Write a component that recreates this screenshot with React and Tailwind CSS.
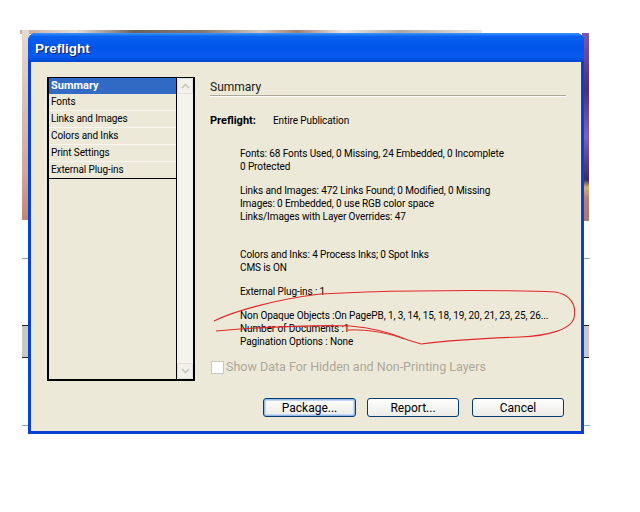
import React from "react";

const items = ["Fonts", "Links and Images", "Colors and Inks", "Print Settings", "External Plug-ins"];

function Chevron({ up }) {
  return (
    <svg width="9" height="6" viewBox="0 0 9 6">
      <path d={up ? "M1 5 L4.5 1.5 L8 5" : "M1 1 L4.5 4.5 L8 1"} fill="none" stroke="#c9c6ba" strokeWidth="1.6" />
    </svg>
  );
}

function XPButton({ children, focused }) {
  return (
    <div
      className={`flex items-center justify-center h-[19px] rounded-[3px] border border-[#003c74] bg-gradient-to-b from-white to-[#ecebe6] text-[12px] text-black ${
        focused ? "shadow-[inset_0_0_0_1px_#98b8ea,inset_0_0_0_2px_#c5d8f5]" : ""
      }`}
    >
      {children}
    </div>
  );
}

export default function App() {
  return (
    <div className="relative w-[640px] h-[512px] bg-white overflow-hidden pt-[33px] pl-[28px] font-['Roboto','Liberation_Sans',sans-serif]">
      {/* background desktop fragments */}
      <div className="absolute left-[20px] top-[30px] w-[462px] h-[4px] bg-[linear-gradient(90deg,#c9a898_0%,#e8ded6_12%,#6e6258_25%,#8a7a70_40%,#d6c8bc_52%,#a08070_60%,#efe9e4_70%,#b0a8a0_82%,#ece6e0_100%)]" />
      <div className="absolute left-[22px] top-[30px] w-[7px] h-[190px] bg-[linear-gradient(180deg,#e6dad2_0%,#d8c0b4_40%,#cfa898_75%,#c08676_100%)]" />
      <div className="absolute left-[582px] top-[33px] w-[7px] h-[188px] bg-[linear-gradient(180deg,#7a5ab0_0%,#4a2f7a_30%,#8060c0_55%,#3c2a60_78%,#d8b070_82%,#b88070_88%,#a87868_100%)]" />
      <div className="absolute left-[22px] top-[258px] w-[6px] h-[1px] bg-[#8fa6b8]" />
      <div className="absolute left-[22px] top-[325px] w-[6px] h-[33px] bg-[#c8c8c8] border-y border-[#202020]" />
      <div className="absolute left-[22px] top-[425px] w-[6px] h-[1px] bg-[#8fa6b8]" />
      <div className="absolute left-[584px] top-[258px] w-[6px] h-[1px] bg-[#8fa6b8]" />
      <div className="absolute left-[584px] top-[325px] w-[5px] h-[33px] bg-[#c8c8c8] border-y border-[#202020]" />
      <div className="absolute left-[584px] top-[425px] w-[6px] h-[1px] bg-[#8fa6b8]" />

      {/* dialog */}
      <div className="relative w-[556px] h-[401px] flex flex-col rounded-t-[8px] overflow-hidden bg-[#0a3fd4]">
        <div className="h-[29px] shrink-0 flex items-center px-[7px] pt-[4px] bg-[linear-gradient(180deg,#3d95ff_0%,#0a62f0_12%,#0055e8_50%,#0a5af0_80%,#0046d0_100%)]">
          <span className="font-['Liberation_Sans',sans-serif] font-bold text-[13.5px] text-white [text-shadow:1px_1px_0_#0a1e6e]">
            Preflight
          </span>
        </div>
        <div className="flex-1 mx-[3px] mb-[3px] bg-[#ece9d8] flex flex-col pl-[16px] pt-[15px]">
          <div className="flex">
            {/* list */}
            <div className="w-[148px] h-[304px] border-2 border-black border-t flex">
              <div className="w-[127px] flex flex-col">
                <div className="h-[16px] bg-[#316ac5] text-white font-bold text-[11px] leading-[16px] pl-[2px]">Summary</div>
                {items.map((t, i) => (
                  <div
                    key={t}
                    className={`h-[17px] text-[10px] tracking-[-0.1px] leading-[16px] pl-[2px] text-black border-b ${
                      i === items.length - 1 ? "border-black" : "border-[#f7f6f0]"
                    }`}
                  >
                    {t}
                  </div>
                ))}
              </div>
              <div className="w-[1px] bg-black" />
              <div className="flex-1 flex flex-col justify-between bg-[#f4f3ee]">
                <div className="h-[16px] flex items-center justify-center bg-[#f2f1eb] border border-[#e2e0d6] rounded-[2px]">
                  <Chevron up />
                </div>
                <div className="h-[16px] flex items-center justify-center bg-[#f2f1eb] border border-[#e2e0d6] rounded-[2px]">
                  <Chevron />
                </div>
              </div>
            </div>

            {/* summary panel */}
            <div className="ml-[15px] w-[356px] flex flex-col text-[10px] leading-[13px] tracking-[-0.1px] text-black">
              <div className="mt-[3px] text-[12px] leading-[14px] tracking-normal text-[#202020]">Summary</div>
              <div className="mt-[1px] h-[2px] border-t border-[#aca899] border-b border-b-white" />
              <div className="mt-[17px] flex items-baseline">
                <span className="w-[63px] font-bold text-[11px] tracking-normal">Preflight:</span>
                <span>Entire Publication</span>
              </div>
              <div className="pl-[30px] flex flex-col">
                <div className="mt-[20px]">
                  <div>Fonts: 68 Fonts Used, 0 Missing, 24 Embedded, 0 Incomplete</div>
                  <div>0 Protected</div>
                </div>
                <div className="mt-[11px]">
                  <div>Links and Images: 472 Links Found; 0 Modified, 0 Missing</div>
                  <div>Images: 0 Embedded, 0 use RGB color space</div>
                  <div>Links/Images with Layer Overrides: 47</div>
                </div>
                <div className="mt-[25px]">
                  <div>Colors and Inks: 4 Process Inks; 0 Spot Inks</div>
                  <div>CMS is ON</div>
                </div>
                <div className="mt-[11px]">
                  <div>External Plug-ins : 1</div>
                </div>
                <div className="mt-[11px]">
                  <div className="whitespace-nowrap">Non Opaque Objects :On PagePB, 1, 3, 14, 15, 18, 19, 20, 21, 23, 25, 26...</div>
                  <div>Number of Documents :1</div>
                  <div>Pagination Options : None</div>
                </div>
              </div>
              <div className="mt-[12px] flex items-center">
                <div className="w-[13px] h-[13px] ml-[1px] border border-[#cac8bb] bg-white" />
                <span className="ml-[2px] text-[12.5px] leading-[14px] tracking-normal text-[#aca899]">
                  Show Data For Hidden and Non-Printing Layers
                </span>
              </div>
            </div>
          </div>

          {/* buttons */}
          <div className="mt-[17px] flex justify-end pr-[17px]">
            <div className="w-[93px]">
              <XPButton focused>Package...</XPButton>
            </div>
            <div className="w-[92px] ml-[11px]">
              <XPButton>Report...</XPButton>
            </div>
            <div className="w-[92px] ml-[13px]">
              <XPButton>Cancel</XPButton>
            </div>
          </div>
        </div>
      </div>

      {/* hand-drawn red annotation */}
      <svg className="absolute inset-0 pointer-events-none" width="640" height="512" viewBox="0 0 640 512">
        <path
          d="M214 321 C232 312 272 300 320 294 L366 292 C430 290 520 290 555 292 C570 294 577 305 574 318 C571 330 546 336 520 337 C490 338 452 340 421 344 L408 340 C394 334 376 328 350 326 C322 325 272 327 240 329 L216 331"
          fill="none"
          stroke="#e0282a"
          strokeWidth="1.1"
        />
        <path d="M348 330 C370 329 392 334 404 339" fill="none" stroke="#e0282a" strokeWidth="1" />
      </svg>
    </div>
  );
}
